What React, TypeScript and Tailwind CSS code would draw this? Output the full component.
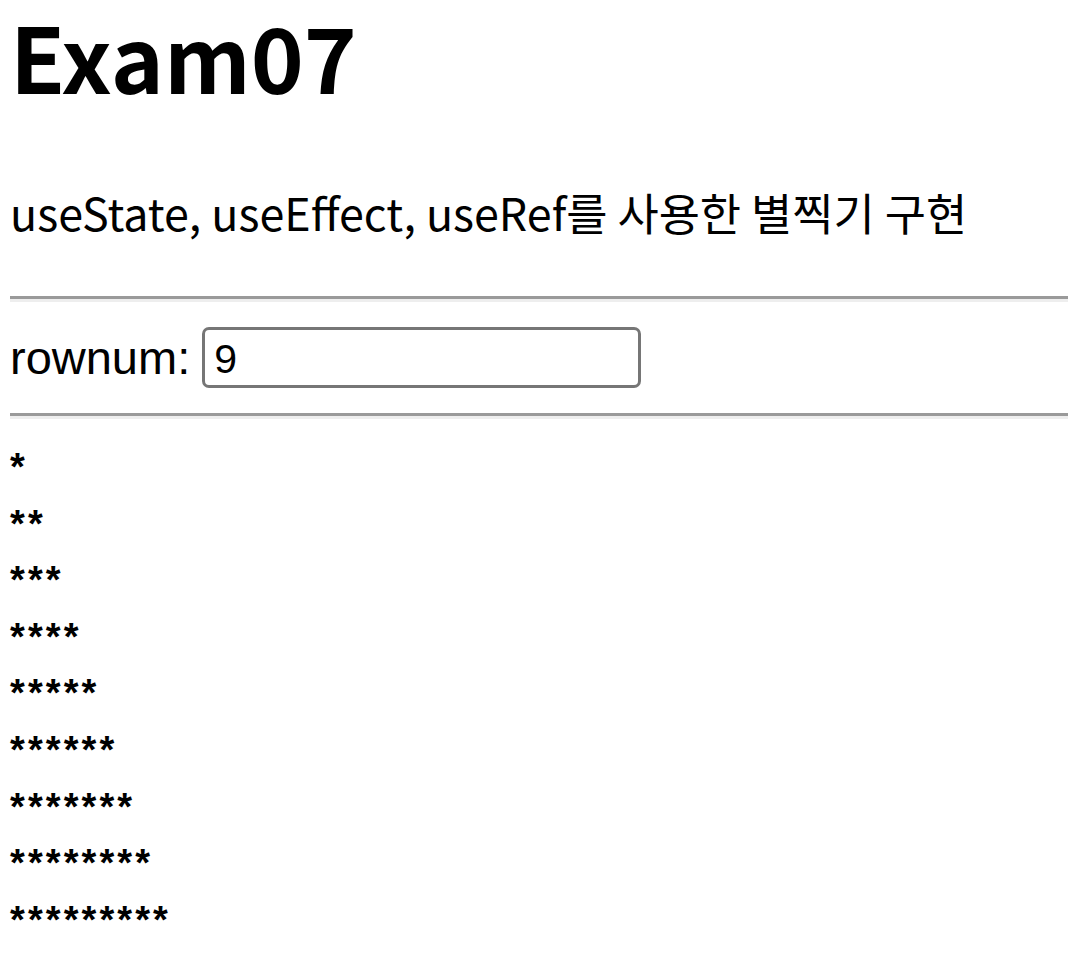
import { useState } from 'react';

export default function App() {
  const [rownum, setRownum] = useState('9');
  const n = parseInt(rownum, 10) || 0;
  const rows = Array.from({ length: n }, (_, i) => '*'.repeat(i + 1));

  return (
    <div className="min-h-screen bg-white text-black pl-[10px] overflow-hidden">
      <h1 className="font-['Noto_Sans_CJK_KR',sans-serif] text-[90px] font-bold leading-[110px]">
        Exam07
      </h1>
      <p className="font-['Noto_Sans_CJK_KR',sans-serif] text-[44.8px] leading-[46px] mt-[79px]">
        useState, useEffect, useRef를 사용한 별찍기 구현
      </p>

      <hr className="mt-[61px] border-0 border-t-[3px] border-t-[#9a9a9a] border-b-[3px] border-b-[#eeeeee]" />

      <div className="flex items-center h-[111px] font-['Liberation_Sans',Arial,sans-serif]">
        <label className="text-[47px] leading-none mr-[12px]">rownum:</label>
        <input
          value={rownum}
          onChange={(e) => setRownum(e.target.value)}
          className="w-[439px] h-[61px] border-[3px] border-[#767676] rounded-[7px] px-[9px] pt-[4px] text-[41px] font-['Liberation_Sans',Arial,sans-serif] outline-none"
        />
      </div>

      <hr className="border-0 border-t-[3px] border-t-[#9a9a9a] border-b-[3px] border-b-[#eeeeee]" />

      <div className="pt-[20px] font-['Liberation_Sans',Arial,sans-serif] font-bold text-[38px] tracking-[3.1px]">
        {rows.map((r, i) => (
          <div key={i} className="h-[56.6px] leading-[56.6px]">
            {r}
          </div>
        ))}
      </div>
    </div>
  );
}
